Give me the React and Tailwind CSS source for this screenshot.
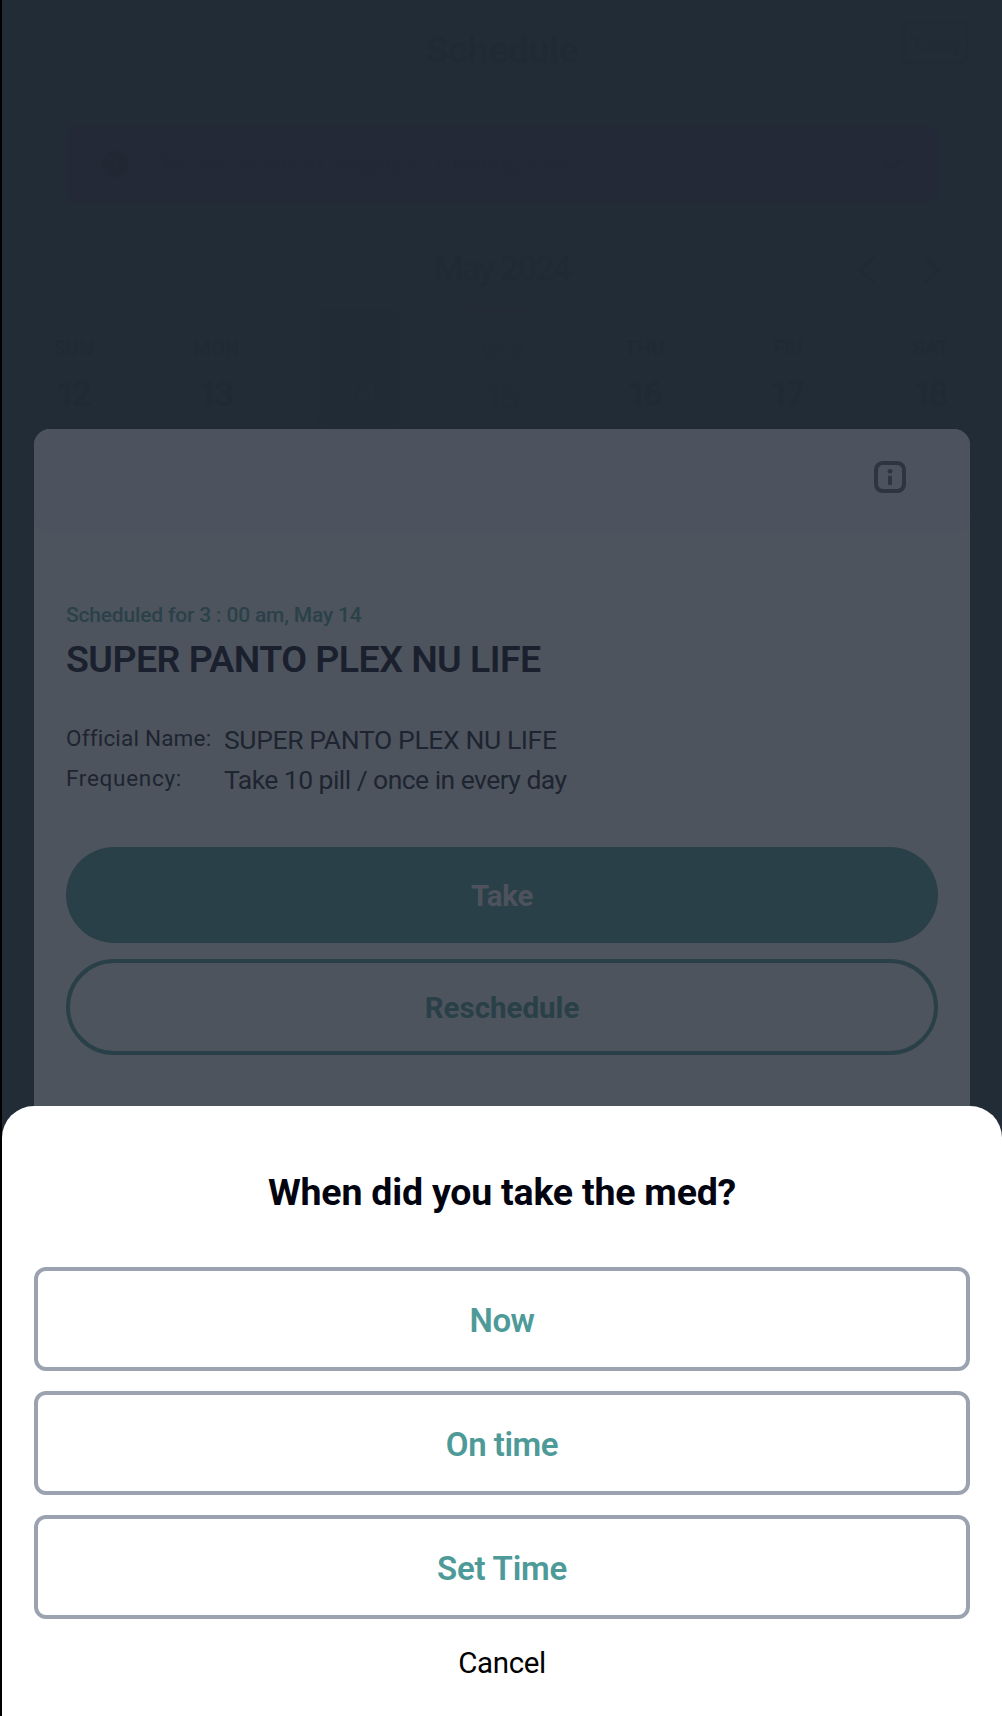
const days = [
  { name: 'SUN', date: '12' },
  { name: 'MON', date: '13' },
  { name: 'TUE', date: '14', state: 'selected' },
  { name: 'WED', date: '15', state: 'today' },
  { name: 'THU', date: '16' },
  { name: 'FRI', date: '17' },
  { name: 'SAT', date: '18' },
];

const options = [
  { label: 'Now', tracking: 'tracking-[-0.5px]' },
  { label: 'On time', tracking: 'tracking-[-0.45px]' },
  { label: 'Set Time', tracking: 'tracking-[-0.2px]' },
];

const dayBox = {
  selected: 'bg-[#212b35] text-[#222c36]',
  today: 'border-4 border-[#222b36] text-[#212b36]',
};

function Chevron({ points, className }) {
  return (
    <svg viewBox="0 0 20 32" className={className} fill="none" stroke="currentColor" strokeWidth="3">
      <polyline points={points} />
    </svg>
  );
}

function Header() {
  return (
    <header className="grid h-[125px] grid-cols-3 items-start">
      <h1 className="col-start-2 mt-[22px] text-center text-[37.5px] leading-[56px] font-semibold tracking-[-0.33px] text-[#202a35]">
        Schedule
      </h1>
      <div className="mt-5 mr-[33px] flex h-11 w-[67px] justify-center justify-self-end rounded-lg border-4 border-[#212b36] text-[20px] leading-[42px] font-semibold tracking-[-0.7px] text-[#212b36]">
        Today
      </div>
    </header>
  );
}

function SupplyAlert() {
  return (
    <div className="mx-16 flex h-[78px] items-center rounded-xl bg-[#232936] pr-9 pl-9">
      <svg viewBox="0 0 26 26" className="size-[26px]">
        <circle cx="13" cy="13" r="13" fill="#222734" />
        <path d="M13 6.5v8M13 17.5v2.5" stroke="#232936" strokeWidth="2.5" />
      </svg>
      <p className="ml-5 text-[24px] leading-8 tracking-[0.65px] text-[#212a36]">
        The medication supply is running low
      </p>
      <svg viewBox="0 0 20 12" className="ml-auto h-3 w-5" fill="none" stroke="#222835" strokeWidth="2">
        <path d="M2 2l8 8 8-8" />
      </svg>
    </div>
  );
}

function MonthBar() {
  return (
    <div className="mt-[41px] grid h-[64px] grid-cols-3 items-center text-[#202a34]">
      <p className="col-start-2 pb-[17px] text-center text-[34px] leading-[40px] font-medium tracking-[-1.7px]">
        May 2024
      </p>
      <div className="mr-[60px] flex gap-[45px] justify-self-end pb-[13px]">
        <Chevron points="17,3 4,16 17,29" className="h-8 w-5" />
        <Chevron points="3,3 16,16 3,29" className="h-8 w-5" />
      </div>
    </div>
  );
}

function WeekStrip() {
  return (
    <div className="grid h-[121px] grid-cols-7 justify-items-center overflow-hidden">
      {days.map((d) => (
        <div
          key={d.name}
          className={`flex h-[124px] w-[81px] flex-col items-center rounded-xl pt-[26px] ${
            dayBox[d.state] ?? 'text-[#202a35]'
          }`}
        >
          <span className="text-[20px] leading-7 font-medium">{d.name}</span>
          <span className="mt-[13px] pr-[4px] text-[35px] leading-10 font-semibold tracking-[-4px]">{d.date}</span>
        </div>
      ))}
    </div>
  );
}

function InfoIcon() {
  return (
    <svg viewBox="0 0 32 32" className="size-8">
      <rect x="2" y="2" width="28" height="28" rx="6.8" fill="none" stroke="#2e3540" strokeWidth="4" />
      <circle cx="16" cy="10.3" r="2.4" fill="#2e3540" />
      <rect x="14" y="14.8" width="4" height="9.2" rx="1" fill="#2e3540" />
    </svg>
  );
}

function MedicationCard() {
  return (
    <section className="mx-8 h-[700px] overflow-hidden rounded-t-2xl bg-[#4d545d]">
      <div className="flex h-[104px] justify-end rounded-b-2xl bg-[#4c525e] pt-8 pr-16">
        <InfoIcon />
      </div>
      <div className="px-8 pt-[68px]">
        <p className="text-[21px] leading-7 font-medium tracking-[-0.18px] text-[#2b4149]">
          Scheduled for 3 : 00 am, May 14
        </p>
        <h2 className="mt-[6px] text-[37.5px] leading-[48px] font-semibold tracking-[-0.54px] text-[#1b202e]">
          SUPER PANTO PLEX NU LIFE
        </h2>
        <dl className="mt-[37px] grid grid-cols-[158px_1fr] text-[#1e2431]">
          <dt className="text-[22.5px] leading-9 tracking-[0.2px]">Official Name:</dt>
          <dd className="h-10 text-[26.5px] leading-10 tracking-[-0.38px]">SUPER PANTO PLEX NU LIFE</dd>
          <dt className="text-[22.5px] leading-9 tracking-[0.7px]">Frequency:</dt>
          <dd className="h-10 text-[26.5px] leading-10 tracking-[-0.54px]">
            Take 10 pill / once in every day
          </dd>
        </dl>
        <button className="mt-[47px] flex h-24 w-full items-center justify-center rounded-full bg-[#2a4048] pt-[2px] text-[29.5px] font-bold tracking-[-0.3px] text-[#4d525d]">
          Take
        </button>
        <button className="mt-4 flex h-24 w-full items-center justify-center rounded-full border-4 border-[#2a4048] pt-[2px] text-[29.5px] font-bold text-[#2a4048]">
          Reschedule
        </button>
      </div>
    </section>
  );
}

function TakeSheet() {
  return (
    <section className="absolute inset-x-0 bottom-0 h-[610px] rounded-t-[32px] bg-white px-8 pt-[62px]">
      <h2 className="text-center text-[37.5px] leading-[48px] font-bold tracking-[-0.22px] text-[#020410]">
        When did you take the med?
      </h2>
      <div className="mt-[51px] flex flex-col gap-5">
        {options.map((o) => (
          <button
            key={o.label}
            className={`flex h-[104px] items-center justify-center rounded-xl border-4 border-[#9ca3b0] pt-[3px] text-[33px] font-semibold text-[#4d9a98] ${o.tracking}`}
          >
            {o.label}
          </button>
        ))}
      </div>
      <button className="mt-6 block w-full text-center text-[29.5px] leading-10 tracking-[-0.4px] text-black">
        Cancel
      </button>
    </section>
  );
}

export default function App() {
  return (
    <div className="h-[1716px] w-[1002px] overflow-hidden bg-black pl-[2px] font-['Roboto',sans-serif]">
      <div className="relative h-full overflow-hidden bg-[#222c37]">
        <Header />
        <SupplyAlert />
        <MonthBar />
        <WeekStrip />
        <MedicationCard />
        <TakeSheet />
      </div>
    </div>
  );
}
